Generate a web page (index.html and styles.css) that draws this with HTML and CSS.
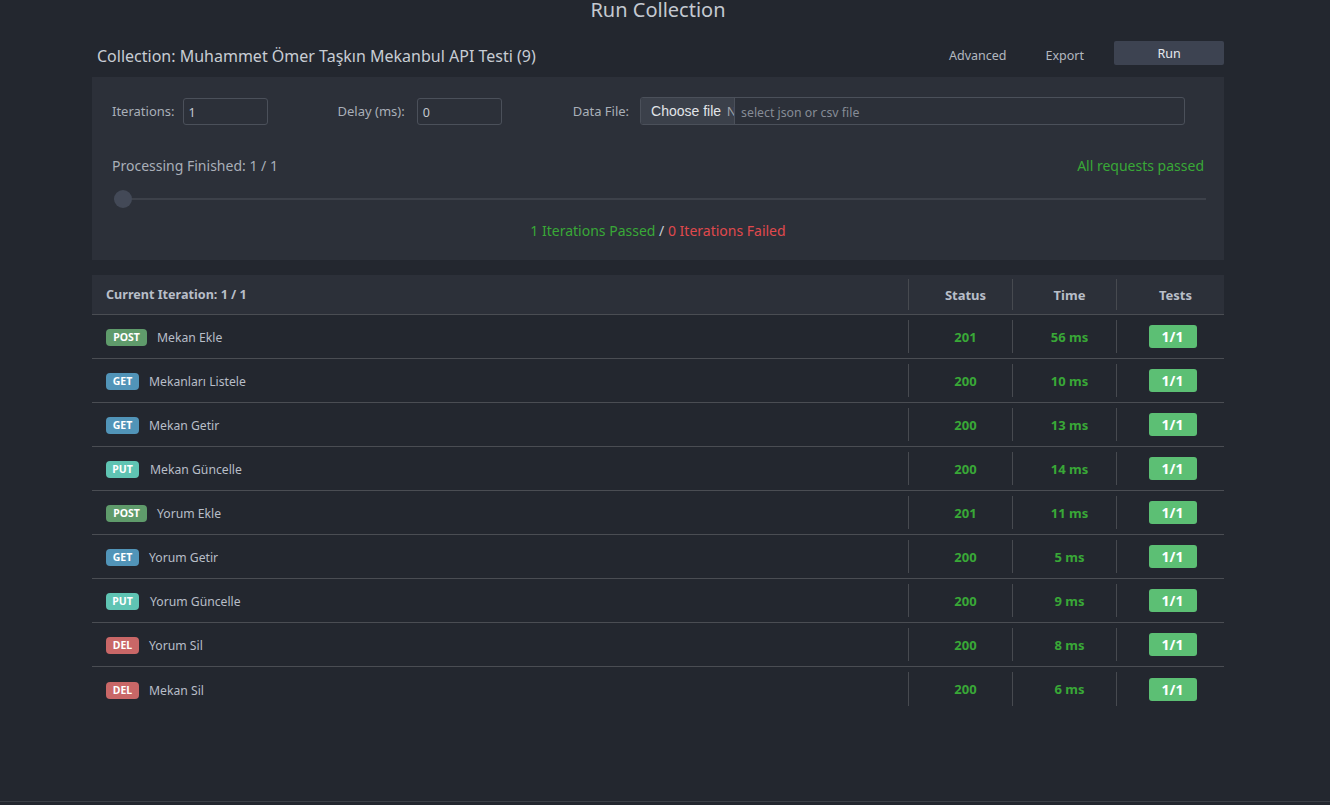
FILE: index.html
```html
<!DOCTYPE html>
<html>
<head>
<meta charset="utf-8">
<link rel="stylesheet" href="styles.css">
</head>
<body>
<div class="page">
  <h1 class="title">Run Collection</h1>
  <div class="container">
    <div class="head-row">
      <div class="coll-name">Collection: Muhammet Ömer Taşkın Mekanbul API Testi (9)</div>
      <div class="actions">
        <span class="link">Advanced</span>
        <span class="link">Export</span>
        <button class="run-btn">Run</button>
      </div>
    </div>
    <div class="panel">
      <div class="opts">
        <label class="lbl lbl-iter">Iterations:</label>
        <div class="inp w-iter">1</div>
        <label class="lbl lbl-delay">Delay (ms):</label>
        <div class="inp w-delay">0</div>
        <label class="lbl lbl-file">Data File:</label>
        <div class="file">
          <span class="file-btn">Choose file</span><span class="file-cut">N</span><span class="file-ph">select json or csv file</span>
        </div>
      </div>
      <div class="progress-row">
        <span class="proc">Processing Finished: 1 / 1</span>
        <span class="allpass">All requests passed</span>
      </div>
      <div class="slider"><span class="thumb"></span></div>
      <div class="summary"><span class="ok">1 Iterations Passed</span> <span class="slash">/</span> <span class="fail">0 Iterations Failed</span></div>
    </div>

    <div class="table">
      <div class="thead">
        <div class="c-name">Current Iteration: 1 / 1</div>
        <div class="c-col">Status</div>
        <div class="c-col">Time</div>
        <div class="c-col">Tests</div>
      </div>
      <div class="tr"><div class="c-name"><span class="m post">POST</span><span class="rn">Mekan Ekle</span></div><div class="c-col g">201</div><div class="c-col g">56 ms</div><div class="c-col"><span class="tb">1/1</span></div></div>
      <div class="tr"><div class="c-name"><span class="m get">GET</span><span class="rn">Mekanları Listele</span></div><div class="c-col g">200</div><div class="c-col g">10 ms</div><div class="c-col"><span class="tb">1/1</span></div></div>
      <div class="tr"><div class="c-name"><span class="m get">GET</span><span class="rn">Mekan Getir</span></div><div class="c-col g">200</div><div class="c-col g">13 ms</div><div class="c-col"><span class="tb">1/1</span></div></div>
      <div class="tr"><div class="c-name"><span class="m put">PUT</span><span class="rn">Mekan Güncelle</span></div><div class="c-col g">200</div><div class="c-col g">14 ms</div><div class="c-col"><span class="tb">1/1</span></div></div>
      <div class="tr"><div class="c-name"><span class="m post">POST</span><span class="rn">Yorum Ekle</span></div><div class="c-col g">201</div><div class="c-col g">11 ms</div><div class="c-col"><span class="tb">1/1</span></div></div>
      <div class="tr"><div class="c-name"><span class="m get">GET</span><span class="rn">Yorum Getir</span></div><div class="c-col g">200</div><div class="c-col g">5 ms</div><div class="c-col"><span class="tb">1/1</span></div></div>
      <div class="tr"><div class="c-name"><span class="m put">PUT</span><span class="rn">Yorum Güncelle</span></div><div class="c-col g">200</div><div class="c-col g">9 ms</div><div class="c-col"><span class="tb">1/1</span></div></div>
      <div class="tr"><div class="c-name"><span class="m del">DEL</span><span class="rn">Yorum Sil</span></div><div class="c-col g">200</div><div class="c-col g">8 ms</div><div class="c-col"><span class="tb">1/1</span></div></div>
      <div class="tr last"><div class="c-name"><span class="m del">DEL</span><span class="rn">Mekan Sil</span></div><div class="c-col g">200</div><div class="c-col g">6 ms</div><div class="c-col"><span class="tb">1/1</span></div></div>
    </div>
  </div>
  <div class="footer-line"></div>
</div>
</body>
</html>
```

FILE: styles.css
```css
html, body {
  margin: 0;
  padding: 0;
  background: #23272f;
  height: 100%;
  overflow: hidden;
}
body {
  font-family: "Noto Sans", "Open Sans", sans-serif;
  color: #b8bec8;
}
.page {
  height: 805px;
  display: flex;
  flex-direction: column;
  position: relative;
}
.title {
  margin: 0 0 0 92px;
  width: 1132px;
  text-align: center;
  font-weight: 400;
  font-size: 20px;
  line-height: 20px;
  height: 20px;
  color: #c4c9d1;
}
.container {
  width: 1132px;
  margin-left: 92px;
}
.head-row {
  display: flex;
  align-items: flex-start;
  justify-content: space-between;
  height: 57px;
}
.coll-name {
  font-size: 16px;
  line-height: 22px;
  color: #c8cdd4;
  padding-left: 5px;
  padding-top: 25px;
}
.actions {
  display: flex;
  align-items: flex-start;
  padding-top: 21px;
}
.link {
  font-size: 12.5px;
  line-height: 18px;
  color: #b3b8c0;
  margin-right: 39px;
  padding-top: 6px;
}
.run-btn {
  width: 110px;
  height: 24px;
  border: none;
  border-radius: 2px;
  background: #3d4351;
  color: #e6e9ee;
  font-family: inherit;
  font-size: 12.5px;
  padding: 0;
  margin-left: -9px;
}
.panel {
  background: #2c3039;
  height: 183px;
  padding: 20px 20px 0 20px;
  box-sizing: border-box;
}
.opts {
  display: flex;
  align-items: center;
  height: 28px;
}
.lbl {
  font-size: 13px;
  color: #a9afb8;
  margin-right: 11px;
}
.lbl-iter { margin-right: 8px; }
.lbl-delay { margin-left: 70px; margin-right: 12px; }
.lbl-file { margin-left: 71px; }
.inp {
  height: 27px;
  box-sizing: border-box;
  border: 1px solid #4b505a;
  border-radius: 3px;
  font-size: 12.5px;
  color: #c3c8cf;
  padding: 5px 5px 0 5px;
}
.w-iter { width: 85px; }
.w-delay { width: 85px; }
.file {
  display: flex;
  align-items: stretch;
  width: 545px;
  height: 28px;
  box-sizing: border-box;
  border: 1px solid #4b505a;
  border-radius: 3px;
  overflow: hidden;
}
.file-btn {
  background: #3b404a;
  color: #e1e4e8;
  font-family: "Liberation Sans", Arial, sans-serif;
  font-size: 14px;
  padding: 5px 0 0 10px;
  width: 86px;
  box-sizing: border-box;
  white-space: nowrap;
  overflow: hidden;
}
.file-cut {
  background: #3b404a;
  color: #9fa4ab;
  font-family: "Liberation Sans", Arial, sans-serif;
  font-size: 13px;
  width: 7px;
  padding-top: 6px;
  overflow: hidden;
  border-right: 1px solid #4b505a;
}
.file-ph {
  font-size: 12.3px;
  color: #868c96;
  padding: 6px 0 0 6px;
}
.progress-row {
  display: flex;
  justify-content: space-between;
  margin-top: 30px;
  height: 22px;
  line-height: 22px;
  align-items: center;
}
.proc {
  font-size: 14px;
  color: #a9afb8;
}
.allpass {
  font-size: 14px;
  color: #39a837;
}
.slider {
  margin: 21px 0 0 2px;
  height: 2px;
  background: #3d414a;
  position: relative;
  width: 1092px;
}
.thumb {
  position: absolute;
  left: 0;
  top: -8px;
  width: 18px;
  height: 18px;
  border-radius: 50%;
  background: #434957;
}
.summary {
  text-align: center;
  margin-top: 21px;
  font-size: 14px;
  line-height: 20px;
}
.ok { color: #39a837; }
.fail { color: #e0494d; }
.slash { color: #c8cdd4; }

.table {
  margin-top: 15px;
}
.thead {
  display: grid;
  grid-template-columns: 816px 104px 104px 108px;
  background: #2c3039;
  height: 40px;
  box-sizing: border-box;
  border-bottom: 1px solid #4a4d53;
  align-items: stretch;
}
.thead > div, .tr > div {
  display: flex;
  align-items: center;
  font-size: 13px;
  font-weight: 700;
}
.thead .c-name {
  padding-left: 14px;
  font-size: 12.6px;
  color: #b8bec8;
}
.thead .c-col {
  justify-content: center;
  color: #b8bec8;
  border-left: 1px solid #474a50;
  margin: 4px 0;
  padding-left: 10px;
}
.tr {
  display: grid;
  grid-template-columns: 816px 104px 104px 108px;
  height: 44px;
  box-sizing: border-box;
  border-bottom: 1px solid #4a4d53;
}
.tr.last { border-bottom: none; }
.tr .c-name {
  padding-left: 14px;
  padding-top: 2px;
  font-weight: 400;
}
.tr .c-col {
  justify-content: center;
  border-left: 1px solid #474a50;
  margin: 5px 0;
  padding-left: 10px;
}
.g { color: #39a837; }
.m {
  display: inline-block;
  height: 17px;
  line-height: 17px;
  border-radius: 4px;
  color: #fff;
  font-size: 10.5px;
  font-weight: 700;
  text-align: center;
  margin-right: 10px;
}
.post { background: #5f9b6b; width: 41px; }
.get { background: #5194b8; width: 33px; }
.put { background: #5fc4b3; width: 33px; margin-right: 11px; }
.del { background: #c96767; width: 33px; }
.rn {
  font-size: 12.2px;
  color: #b8bec8;
}
.tb {
  display: inline-block;
  width: 48px;
  height: 23px;
  line-height: 23px;
  text-align: center;
  background: #5cbf74;
  color: #fff;
  border-radius: 3px;
  font-size: 14px;
  font-weight: 700;
  margin-left: -6px;
}
.footer-line {
  position: absolute;
  left: 0;
  right: 0;
  top: 801px;
  height: 1px;
  background: #3b3f46;
}
```
